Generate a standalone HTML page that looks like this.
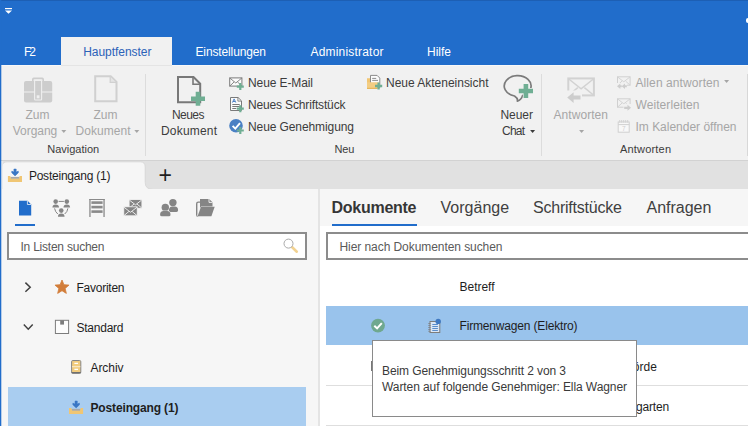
<!DOCTYPE html>
<html lang="de">
<head>
<meta charset="utf-8">
<title>F2</title>
<style>

html,body{margin:0;padding:0}
body{width:748px;height:426px;overflow:hidden;position:relative;background:#f5f5f5;font-family:"Liberation Sans",sans-serif;}
.a{position:absolute}
.t{position:absolute;white-space:pre;z-index:1}
svg{position:absolute;overflow:visible}

</style>
</head>
<body>

<!-- title / menu bar -->
<div class="a" style="left:0;top:0;width:748px;height:65px;background:#216dcb"></div>
<div class="a" style="left:0;top:0;width:748px;height:1px;background:#1d5fb4"></div>
<div class="a" style="left:746px;top:18px;width:3px;height:5px;background:#fff;border-radius:2px 0 0 2px"></div>
<!-- quick access arrow -->
<svg style="left:5px;top:8px" width="8" height="6" viewBox="0 0 8 6"><rect x="0" y="0" width="7" height="1.2" fill="#fff"/><path d="M0 2.4h7L3.5 5.8z" fill="#fff"/></svg>
<!-- active menu tab -->
<div class="a" style="left:61px;top:37px;width:111px;height:28px;background:#f1f1f1"></div>
<!-- ribbon -->
<div class="a" style="left:0;top:65px;width:748px;height:1px;background:#f8f8f8;z-index:1"></div>
<div class="a" style="left:61px;top:65px;width:111px;height:1px;background:#e4e4e4;z-index:1"></div>
<div class="a" style="left:0;top:65px;width:748px;height:95px;background:#f1f1f1"></div>
<div class="a" style="left:0;top:160px;width:748px;height:1px;background:#d2d2d2"></div>
<div class="a" style="left:145px;top:74px;width:1px;height:82px;background:#dcdcdc"></div>
<div class="a" style="left:541px;top:74px;width:1px;height:82px;background:#dcdcdc"></div>
<div class="a" style="left:747px;top:74px;width:1px;height:82px;background:#d8d8d8"></div>
<!-- doc tab strip -->
<div class="a" style="left:0;top:161px;width:748px;height:28px;background:#e1e1e1"></div>
<div class="a" style="left:150px;top:188.500px;width:598px;height:1px;background:#d6d6d6"></div>
<svg style="left:0;top:161px" width="160" height="29" viewBox="0 0 160 29"><path d="M2 28.500V6Q2 .8 7.200 .8H140.200Q145.200 .8 145.200 6V21.500Q145.200 28.500 153.500 28.500z" fill="#f6f6f6" stroke="#d4d4d4" stroke-width=".8"/><rect x="0" y="28.200" width="160" height="1" fill="#f6f6f6"/><rect x="0" y="0" width="2.400" height="29" fill="#f6f6f6"/></svg>
<!-- main panels -->
<div class="a" style="left:0;top:189px;width:748px;height:237px;background:#f6f6f6"></div>
<div class="a" style="left:318px;top:189px;width:2px;height:237px;background:#e4e4e4"></div>
<div class="a" style="left:320px;top:226px;width:428px;height:200px;background:#fff"></div>
<!-- window left border -->
<div class="a" style="left:0;top:0;width:1px;height:426px;background:#216dcb;z-index:4"></div>
<div class="a" style="left:1px;top:0;width:1px;height:426px;background:rgba(33,109,203,.3);z-index:4"></div>
<!-- underline markers -->
<div class="a" style="left:15px;top:224px;width:20px;height:2px;background:#216dcb"></div>
<div class="a" style="left:332px;top:224px;width:85px;height:2px;background:#216dcb"></div>
<!-- search boxes -->
<div class="a" style="left:7px;top:232px;width:296px;height:24px;border:2px solid #8c8c8c;background:#fff"></div>
<div class="a" style="left:326px;top:232px;width:430px;height:24px;border:2px solid #8c8c8c;background:#fff"></div>
<!-- tree selection -->
<div class="a" style="left:8px;top:387px;width:298px;height:39px;background:#a9cdf0"></div>
<!-- list rows -->
<div class="a" style="left:326px;top:306px;width:422px;height:39px;background:#99c3ec"></div>
<div class="a" style="left:326px;top:385px;width:422px;height:1px;background:#dedede"></div>
<div class="a" style="left:326px;top:425px;width:422px;height:1px;background:#dedede"></div>
<div class="a" style="left:370.500px;top:361px;width:2px;height:10px;background:#777"></div>
<!-- tooltip -->
<div class="a" style="left:372px;top:340px;width:263px;height:75px;border:1px solid #8a8a8a;background:#fff;z-index:2;box-sizing:content-box"></div>
<svg style="left:0;top:0;z-index:1" width="748" height="426" viewBox="0 0 748 426">
<g fill="#cdcdcd">
<path d="M32 82v-2.6q0-1.8 1.8-1.8h8.4q1.8 0 1.8 1.8V82h-1.6v-2.2q0-.6-.6-.6h-7.6q-.6 0-.6.6V82z"/>
<path d="M24 83q0-2 2-2h24.2q2 0 2 2v8.400H24z"/>
<path d="M24 92.6h28.2v7.9q0 2-2 2H26q-2 0-2-2z"/>
</g>
<rect x="34.6" y="80.400" width="7" height="19.600" rx=".8" fill="#cdcdcd" stroke="#efefef" stroke-width="1.100"/>
<rect x="36.7" y="95.300" width="2.800" height="3" fill="#efefef"/>
<path d="M95.200 76.200h15.500l5.800 5.800v19.200h-21.300z" fill="none" stroke="#d0d0d0" stroke-width="2"/><path d="M110.200 76.400v6h6" fill="#e4e4e4" stroke="#d0d0d0" stroke-width="1.200"/>
<path d="M178 77h15.500l6.700 6.700v18.600h-22.200z" fill="none" stroke="#787878" stroke-width="2"/><path d="M193 77.300v6.900h6.900" fill="none" stroke="#787878" stroke-width="1.600"/>
<path d="M195.70 91.70h4.60v4.70h4.70v4.60h-4.70v4.70h-4.60v-4.70h-4.70v-4.60h4.70z" fill="#6fae93"/>
<rect x="229.700" y="77.900" width="12.200" height="8.200" fill="#fbfbfb" stroke="#7a7a7a" stroke-width="1"/><path d="M229.900 78.100l5.900 4.900 5.900-4.900M229.900 86l4.300-4.200M241.700 86l-4.300-4.200" fill="none" stroke="#7a7a7a" stroke-width=".9"/>
<path d="M239.20 83.10h2.20v2.40h2.40v2.20h-2.40v2.40h-2.20v-2.40h-2.40v-2.20h2.40z" fill="#6fae93"/>
<path d="M230.500 97.500h7.600l3.400 3.400v9.600h-11z" fill="#fbfbfb" stroke="#7a7a7a" stroke-width="1"/><path d="M237.900 97.700v3.400h3.400" fill="none" stroke="#7a7a7a" stroke-width=".9"/><path d="M232.300 104.500h7.400M232.300 106.500h7.400M232.300 108.500h4" stroke="#7a7a7a" stroke-width="1"/><path d="M232.400 102.600l1.700-3.700 1.700 3.700M233 101.500h2.200" fill="none" stroke="#3f78c2" stroke-width=".9"/>
<path d="M239.20 105.20h2.20v2.40h2.40v2.20h-2.40v2.40h-2.20v-2.40h-2.40v-2.20h2.40z" fill="#6fae93"/>
<circle cx="236" cy="125.800" r="6.800" fill="#4a80c4"/><path d="M232.600 125.800l2.700 2.800 4.700-5.400" fill="none" stroke="#fff" stroke-width="1.900"/>
<path d="M239.20 127.00h2.20v2.40h2.40v2.20h-2.40v2.40h-2.20v-2.40h-2.40v-2.20h2.40z" fill="#6fae93"/>
<path d="M367 78.200h3.800l1 1.400h1.200v9.400h-6z" fill="#f1c572"/><path d="M370.500 75.400h6.600l2.700 2.700v9.500h-9.300z" fill="#fcfcfc" stroke="#808080" stroke-width=".9"/><path d="M372.200 78.400h4M372.200 80.400h5.800" stroke="#808080" stroke-width=".9"/><path d="M367 89v-6.800h11.800l-1.400 6.800z" fill="#f3cd83"/><path d="M367 88.400h10.500" stroke="#e6b75c" stroke-width="1.200"/>
<path d="M377.45 82.40h2.30v2.45h2.45v2.30h-2.45v2.45h-2.30v-2.45h-2.45v-2.30h2.45z" fill="#6fae93"/>
<path d="M514.500 96A13.400 10.300 0 1 1 522.500 95.600Q521.500 99.800 517.300 101.100Q518.300 98.600 514.500 96z" fill="none" stroke="#7b7b7b" stroke-width="1.700" stroke-linejoin="round"/>
<path d="M523.60 83.90h4.60v4.80h4.80v4.60h-4.80v4.80h-4.60v-4.80h-4.80v-4.60h4.80z" fill="#6fae93" stroke="#f1f1f1" stroke-width="1.400" paint-order="stroke"/>
<rect x="568.300" y="78.400" width="25.600" height="17" fill="none" stroke="#d2d2d2" stroke-width="2"/><path d="M568.800 79l12.300 9.800 12.300-9.800M568.800 95l9-7.400M593.400 95l-9-7.400" fill="none" stroke="#d2d2d2" stroke-width="1.500"/>
<rect x="566" y="90.500" width="16" height="13" fill="#f1f1f1"/><path d="M567.200 97.600l6.400-5.300v3.300h6.900v4h-6.900v3.300z" fill="#cdcdcd"/>
<rect x="617.5" y="76.8" width="12.600" height="8.400" fill="none" stroke="#d0d0d0" stroke-width="1"/><path d="M617.7 77.0l6.100 4.800 6.100-4.800M617.7 85.0l4.300-3.900M629.9 85.0l-4.300-3.900" fill="none" stroke="#d0d0d0" stroke-width=".9"/>
<rect x="616.500" y="83" width="10.500" height="6.500" fill="#f1f1f1"/><path d="M617 86.300l3.300-2.800v1.800h1.400v2h-1.400v1.800zM621.700 86.300l3.300-2.800v1.800h1.800v2h-1.800v1.800z" fill="#cdcdcd"/>
<rect x="617.5" y="98.8" width="12.600" height="8.400" fill="none" stroke="#d0d0d0" stroke-width="1"/><path d="M617.7 99.0l6.100 4.800 6.100-4.800M617.7 107.0l4.300-3.900M629.9 107.0l-4.300-3.900" fill="none" stroke="#d0d0d0" stroke-width=".9"/>
<rect x="623.500" y="104" width="8" height="7.500" fill="#f1f1f1"/><path d="M631 107.800l-3.500-3v1.900h-3.300v2.200h3.300v1.900z" fill="#cdcdcd"/>
<rect x="618.200" y="122" width="11" height="10.200" fill="#f8f8f8" stroke="#d0d0d0" stroke-width="1"/><path d="M618.200 124.600h11" stroke="#d0d0d0" stroke-width="1"/><path d="M619.700 120v2.600M621.700 120v2.600M623.700 120v2.600M625.700 120v2.600M627.700 120v2.600" stroke="#d0d0d0" stroke-width=".9"/>
<path d="M61.30 130.00h5.00l-2.50 2.90z" fill="#a6a6a6"/>
<path d="M134.30 130.00h5.00l-2.50 2.90z" fill="#a6a6a6"/>
<path d="M530.10 130.00h5.00l-2.50 2.90z" fill="#3c3c3c"/>
<path d="M579.10 130.00h5.00l-2.50 2.90z" fill="#a6a6a6"/>
<path d="M724.10 80.00h5.00l-2.50 2.90z" fill="#a6a6a6"/>
<path d="M13.90 169.00L16.20 169.00L16.20 172.10L18.30 171.10L18.40 172.70L15.05 175.90L11.70 172.70L11.80 171.10L13.90 172.10z" fill="#3a77c5" stroke="#3a77c5" stroke-width=".5" stroke-linejoin="round"/><rect x="10.45" y="176.90" width="9" height="2" fill="#a9a9a9"/><path d="M7.90 175.90h2.300l.9 2.900h7.700l.9-2.900h2.300v6.100h-14.100z" fill="#f0c674"/>
<path d="M75.00 401.00L77.30 401.00L77.30 404.10L79.40 403.10L79.50 404.70L76.15 407.90L72.80 404.70L72.90 403.10L75.00 404.10z" fill="#3a77c5" stroke="#3a77c5" stroke-width=".5" stroke-linejoin="round"/><rect x="71.55" y="408.90" width="9" height="2" fill="#a9a9a9"/><path d="M69.00 407.90h2.300l.9 2.900h7.700l.9-2.900h2.300v6.100h-14.100z" fill="#f0c674"/>
<path d="M19 200.800h8.600l3.600 3.600v11h-12.200z" fill="#216dcb"/><path d="M27.400 201v3.500h3.600" fill="none" stroke="#f5f5f5" stroke-width=".8"/>
<g fill="#858585"><circle cx="55.700" cy="201.600" r="2.300"/><path d="M52.400 207.600q0-3.200 3.300-3.200t3.300 3.200z"/><circle cx="66.800" cy="201.600" r="2.300"/><path d="M63.500 207.600q0-3.200 3.300-3.200t3.300 3.200z"/><circle cx="61.250" cy="210.600" r="2.300"/><path d="M57.950 216.700q0-3.300 3.300-3.300t3.300 3.300z"/></g><path d="M58.600 201.400h5.300M54.600 208.400q.6 3.600 3.200 5.600M67.900 208.400q-.6 3.600-3.200 5.600" fill="none" stroke="#858585" stroke-width="1"/>
<g fill="#8a8a8a"><rect x="89.300" y="199" width="1.300" height="18"/><rect x="103.400" y="199" width="1.300" height="18"/><rect x="89.300" y="199" width="15.400" height="1"/><rect x="91.400" y="201.300" width="11.200" height="2.600"/><rect x="91.400" y="205.800" width="11.200" height="2.600"/><rect x="91.400" y="210.300" width="11.200" height="2.600"/></g>
<rect x="129.10" y="199.60" width="12.80" height="8.60" fill="#858585" stroke="#f5f5f5" stroke-width=".8"/><path d="M129.40 200.10l6.10 4.73 6.10 -4.73M129.40 207.90l4.61 -3.87M141.60 207.90l-4.61 -3.87" fill="none" stroke="#f5f5f5" stroke-width=".9"/>
<rect x="123.80" y="206.80" width="13.40" height="9.00" fill="#858585" stroke="#f5f5f5" stroke-width=".8"/><path d="M124.10 207.30l6.40 4.95 6.40 -4.95M124.10 215.50l4.82 -4.05M136.90 215.50l-4.82 -4.05" fill="none" stroke="#f5f5f5" stroke-width=".9"/>
<g fill="#858585"><circle cx="172.90" cy="202.60" r="3.70"/><path d="M168.90 210.30q0 -3.70 3.40 -3.70h2.40q3.40 0 3.40 3.70q0 1.600-1.600 1.600h-6.00q-1.600 0-1.600-1.600z"/></g>
<g fill="#858585"><circle cx="165.30" cy="207.50" r="3.70" stroke="#f5f5f5" stroke-width=".9" paint-order="stroke"/><path d="M160.10 214.70q0 -3.60 3.40 -3.60h3.60q3.40 0 3.40 3.60q0 1.600-1.600 1.600h-7.20q-1.600 0-1.600-1.600z" stroke="#f5f5f5" stroke-width=".9" paint-order="stroke"/></g>
<path d="M200 198.900h9.200l3.300 3.300v6h-12.500z" fill="#858585"/><path d="M209 199v3.400h3.400" fill="none" stroke="#f5f5f5" stroke-width=".9"/><path d="M198.200 216.200q-1.500 0-1.500-1.500v-11q0-1.600 1.600-1.600h1.700" fill="none" stroke="#858585" stroke-width="1.400"/><path d="M197.600 216.200l3.400-9.400h13.700l-3.300 9.400z" fill="#858585" stroke="#f5f5f5" stroke-width=".8" paint-order="stroke"/>
<path d="M292.200 247.300l4.600 4.400" stroke="#f2d291" stroke-width="2.600" stroke-linecap="round"/><circle cx="288.500" cy="243.600" r="4.500" fill="#fff" stroke="#aaa" stroke-width="1"/>
<path d="M25.400 282.600l4.800 4.600-4.800 4.600" fill="none" stroke="#404040" stroke-width="1.500"/>
<path d="M23.800 324.600l4.450 4.600 4.450-4.600" fill="none" stroke="#404040" stroke-width="1.500"/>
<path d="M62.00 280.00L63.94 284.73L69.04 285.11L65.14 288.42L66.35 293.39L62.00 290.70L57.65 293.39L58.86 288.42L54.96 285.11L60.06 284.73z" fill="#d27d3a" stroke="#d27d3a" stroke-width=".8" stroke-linejoin="round"/>
<rect x="55.400" y="320.300" width="13.200" height="13.200" fill="#fcfcfc" stroke="#7c7c7c" stroke-width="1"/><rect x="60.200" y="320.300" width="3.800" height="4.300" fill="#7c7c7c"/>
<rect x="71.600" y="360.500" width="9.200" height="12.800" rx="1.200" fill="#f2cc7e" stroke="#868686" stroke-width="1"/><path d="M72 366.700h8.400" stroke="#f9ecd0" stroke-width="1"/><path d="M74.400 363.300h3.600M74.400 369.400h3.600" stroke="#fff" stroke-width="1.200"/><path d="M71.600 372.700h9.200" stroke="#707070" stroke-width="1.400"/>
<circle cx="378" cy="325.600" r="6.900" fill="#6fa88f"/><path d="M374.300 325.700l2.800 2.700 4.700-5.200" fill="none" stroke="#fff" stroke-width="2"/>
<rect x="430" y="321.500" width="9.800" height="11" fill="#dce8f6" stroke="#7d7d7d" stroke-width="1"/><path d="M428.300 323.500h2.400M428.300 325.500h2.400M428.300 327.500h2.400M428.300 329.500h2.400M428.300 331.300h2.400" stroke="#7d7d7d" stroke-width=".8"/><path d="M432.300 324.500h5.600M432.300 326.500h5.600M432.300 328.500h5.600M432.300 330.500h5.600" stroke="#4b82c6" stroke-width=".9"/><circle cx="438.200" cy="321.400" r="2.700" fill="#3f79c2"/>
<text x="623.700" y="131" font-size="6.500" font-family="Liberation Sans, sans-serif" fill="#cfcfcf" text-anchor="middle">7</text>
</svg>

<!-- text -->
<span class="t" style="left:24.00px;top:44.00px;font-size:12px;line-height:16px;color:#ffffff;letter-spacing:-2.016px;">F2</span>
<span class="t" style="left:83.20px;top:44.00px;font-size:12px;line-height:16px;color:#2c62b8;letter-spacing:-0.038px;">Hauptfenster</span>
<span class="t" style="left:195.50px;top:44.00px;font-size:12px;line-height:16px;color:#ffffff;letter-spacing:-0.130px;">Einstellungen</span>
<span class="t" style="left:310.50px;top:44.00px;font-size:12px;line-height:16px;color:#ffffff;letter-spacing:0.193px;">Administrator</span>
<span class="t" style="left:427.00px;top:44.00px;font-size:12px;line-height:16px;color:#ffffff;letter-spacing:-0.004px;">Hilfe</span>
<span class="t" style="left:25.50px;top:107.00px;font-size:12px;line-height:16px;color:#a6a6a6;letter-spacing:0.000px;">Zum</span>
<span class="t" style="left:12.80px;top:123.00px;font-size:12px;line-height:16px;color:#a6a6a6;letter-spacing:-0.036px;">Vorgang</span>
<span class="t" style="left:93.50px;top:107.00px;font-size:12px;line-height:16px;color:#a6a6a6;letter-spacing:0.000px;">Zum</span>
<span class="t" style="left:75.50px;top:123.00px;font-size:12px;line-height:16px;color:#a6a6a6;letter-spacing:0.042px;">Dokument</span>
<span class="t" style="left:47.20px;top:141.00px;font-size:11px;line-height:16px;color:#3c3c3c;letter-spacing:0.002px;">Navigation</span>
<span class="t" style="left:172.00px;top:107.00px;font-size:12px;line-height:16px;color:#3c3c3c;letter-spacing:-0.547px;">Neues</span>
<span class="t" style="left:161.00px;top:123.00px;font-size:12px;line-height:16px;color:#3c3c3c;letter-spacing:0.185px;">Dokument</span>
<span class="t" style="left:248.00px;top:75.00px;font-size:12px;line-height:16px;color:#3c3c3c;letter-spacing:-0.103px;">Neue E-Mail</span>
<span class="t" style="left:248.00px;top:97.00px;font-size:12px;line-height:16px;color:#3c3c3c;letter-spacing:-0.150px;">Neues Schriftstück</span>
<span class="t" style="left:248.00px;top:119.00px;font-size:12px;line-height:16px;color:#3c3c3c;letter-spacing:-0.095px;">Neue Genehmigung</span>
<span class="t" style="left:386.00px;top:75.00px;font-size:12px;line-height:16px;color:#3c3c3c;letter-spacing:-0.014px;">Neue Akteneinsicht</span>
<span class="t" style="left:334.50px;top:141.00px;font-size:11px;line-height:16px;color:#3c3c3c;letter-spacing:-0.094px;">Neu</span>
<span class="t" style="left:500.50px;top:107.00px;font-size:12px;line-height:16px;color:#3c3c3c;letter-spacing:-0.047px;">Neuer</span>
<span class="t" style="left:502.00px;top:123.00px;font-size:12px;line-height:16px;color:#3c3c3c;letter-spacing:-0.786px;">Chat</span>
<span class="t" style="left:553.50px;top:107.00px;font-size:12px;line-height:16px;color:#a6a6a6;letter-spacing:0.059px;">Antworten</span>
<span class="t" style="left:635.50px;top:75.00px;font-size:12px;line-height:16px;color:#a6a6a6;letter-spacing:0.092px;">Allen antworten</span>
<span class="t" style="left:635.50px;top:97.00px;font-size:12px;line-height:16px;color:#a6a6a6;letter-spacing:0.078px;">Weiterleiten</span>
<span class="t" style="left:635.50px;top:119.00px;font-size:12px;line-height:16px;color:#a6a6a6;letter-spacing:-0.011px;">Im Kalender öffnen</span>
<span class="t" style="left:620.00px;top:141.00px;font-size:11px;line-height:16px;color:#3c3c3c;letter-spacing:0.184px;">Antworten</span>
<span class="t" style="left:28.90px;top:168.00px;font-size:12px;line-height:16px;color:#1e1e1e;letter-spacing:-0.224px;">Posteingang (1)</span>
<span class="t" style="left:158.40px;top:166.50px;font-size:23px;line-height:16px;color:#1e1e1e;letter-spacing:0.000px;">+</span>
<span class="t" style="left:331.50px;top:200.00px;font-size:16px;line-height:16px;color:#363636;letter-spacing:-0.266px;font-weight:700;">Dokumente</span>
<span class="t" style="left:440.50px;top:200.00px;font-size:16px;line-height:16px;color:#404040;letter-spacing:0.026px;">Vorgänge</span>
<span class="t" style="left:533.00px;top:200.00px;font-size:16px;line-height:16px;color:#404040;letter-spacing:-0.216px;">Schriftstücke</span>
<span class="t" style="left:646.50px;top:200.00px;font-size:16px;line-height:16px;color:#404040;letter-spacing:-0.020px;">Anfragen</span>
<span class="t" style="left:20.50px;top:238.50px;font-size:12px;line-height:16px;color:#5a5a5a;letter-spacing:-0.227px;">In Listen suchen</span>
<span class="t" style="left:339.50px;top:238.50px;font-size:12px;line-height:16px;color:#5a5a5a;letter-spacing:-0.068px;">Hier nach Dokumenten suchen</span>
<span class="t" style="left:76.50px;top:279.50px;font-size:12px;line-height:16px;color:#1e1e1e;letter-spacing:-0.254px;">Favoriten</span>
<span class="t" style="left:76.50px;top:319.50px;font-size:12px;line-height:16px;color:#1e1e1e;letter-spacing:-0.243px;">Standard</span>
<span class="t" style="left:90.50px;top:359.50px;font-size:12px;line-height:16px;color:#1e1e1e;letter-spacing:-0.069px;">Archiv</span>
<span class="t" style="left:90.50px;top:399.50px;font-size:12px;line-height:16px;color:#1e1e1e;letter-spacing:-0.144px;font-weight:700;">Posteingang (1)</span>
<span class="t" style="left:459.50px;top:278.50px;font-size:12px;line-height:16px;color:#1e1e1e;letter-spacing:-0.023px;">Betreff</span>
<span class="t" style="left:459.50px;top:318.00px;font-size:12px;line-height:16px;color:#1e1e1e;letter-spacing:-0.169px;">Firmenwagen (Elektro)</span>
<span class="t" style="left:611.50px;top:358.50px;font-size:12px;line-height:16px;color:#1e1e1e;letter-spacing:0.000px;">Behörde</span>
<span class="t" style="left:602.00px;top:398.50px;font-size:12px;line-height:16px;color:#1e1e1e;letter-spacing:-0.129px;">Kindergarten</span>
<span class="t" style="left:382.00px;top:363.00px;font-size:12px;line-height:16px;color:#3a3a3a;letter-spacing:-0.089px;z-index:3;">Beim Genehmigungsschritt 2 von 3</span>
<span class="t" style="left:382.00px;top:379.00px;font-size:12px;line-height:16px;color:#3a3a3a;letter-spacing:-0.085px;z-index:3;">Warten auf folgende Genehmiger: Ella Wagner</span>
</body>
</html>
